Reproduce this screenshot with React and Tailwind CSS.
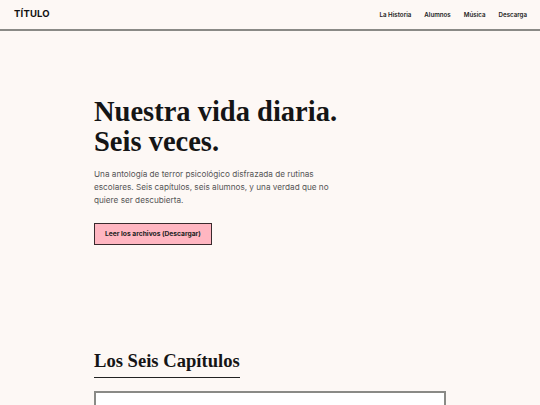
import React from 'react';

const serif = { fontFamily: '"Liberation Serif", "DejaVu Serif", serif' };

const links = ['La Historia', 'Alumnos', 'Música', 'Descarga'];

const Header = () => (
  <header className="h-[31px] border-b-2 border-[#8a8a86] flex items-center justify-between pl-[14px] pr-[13px]">
    <span className="text-[9.5px] font-bold tracking-[0.02em] text-[#111]">TÍTULO</span>
    <nav className="flex gap-[13px] text-[6.2px] font-semibold text-[#222]">
      {links.map((l) => (
        <a key={l} href="#">{l}</a>
      ))}
    </nav>
  </header>
);

const App = () => {
  return (
    <div
      className="min-h-[405px] bg-[#fdf8f5] text-[#1c1c1c]"
      style={{ fontFamily: 'Inter, "Liberation Sans", sans-serif' }}
    >
      <Header />
      <main className="w-[352px] mx-auto">
        <section className="pt-[66px] pb-[104px]">
          <h1 className="text-[28.5px] font-bold leading-[30px] text-[#151515]" style={serif}>
            Nuestra vida diaria.
            <br />
            Seis veces.
          </h1>
          <p className="mt-[11px] w-[250px] text-[8.2px] leading-[13px] text-[#555]">
            Una antología de terror psicológico disfrazada de rutinas escolares. Seis capítulos, seis
            alumnos, y una verdad que no quiere ser descubierta.
          </p>
          <button className="mt-[16px] h-[22px] px-[10px] bg-[#ffb6c1] border border-[#3a2a2d] text-[6.7px] font-bold text-[#222]">
            Leer los archivos (Descargar)
          </button>
        </section>
        <section>
          <h2
            className="inline-block text-[18.6px] font-bold leading-[24px] pb-[4px] border-b border-[#222] text-[#151515]"
            style={serif}
          >
            Los Seis Capítulos
          </h2>
          <div className="mt-[13px] h-[60px] bg-white border-2 border-[#8a8a86]" />
        </section>
      </main>
    </div>
  );
};

export default App;
